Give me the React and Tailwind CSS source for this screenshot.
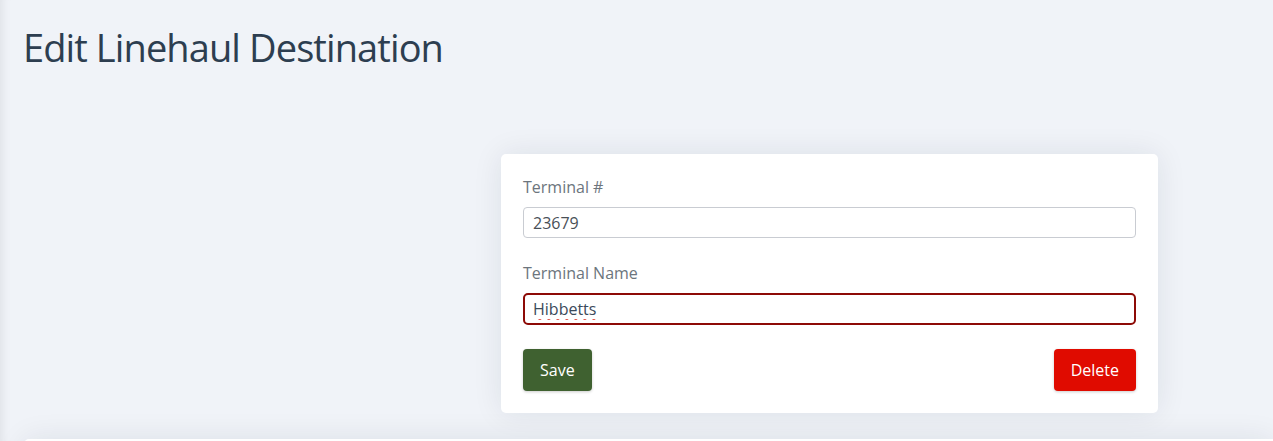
import React from 'react';

const font = { fontFamily: '"Open Sans", "Noto Sans", sans-serif' };

function Field({ label, value, focused }) {
  return (
    <div className="flex flex-col">
      <label className="text-[16px] leading-[22px] text-[#6c757d]">{label}</label>
      <input
        readOnly
        value={value}
        spellCheck={false}
        className={
          focused
            ? 'mt-[9px] h-[32px] w-full rounded-[5px] border-2 border-[#8d0a06] bg-white px-[8px] text-[16px] text-[#3b4a5a] outline-none underline decoration-wavy decoration-[#e0453a] underline-offset-[3px]'
            : 'mt-[9px] h-[31px] w-full rounded-[4px] border border-[#c9ccd2] bg-white px-[9px] text-[16px] text-[#495057] outline-none'
        }
      />
    </div>
  );
}

export default function App() {
  return (
    <div
      style={font}
      className="h-[441px] overflow-hidden bg-[#f0f3f8] shadow-[inset_10px_0_10px_-8px_rgba(0,0,0,0.08)]"
    >
      <div className="px-[23px] pt-[24px]">
        <h1 className="text-[38px] leading-[46px] tracking-[-0.9px] font-normal text-[#2d3e50]">Edit Linehaul Destination</h1>

        {/* Form card */}
        <div className="mt-[84px] ml-[478px] w-[657px] rounded-[5px] bg-white px-[22px] pt-[22px] pb-[22px] shadow-[0_0_30px_rgba(20,30,50,0.09)]">
          <Field label="Terminal #" value="23679" />
          <div className="mt-[24px]">
            <Field label="Terminal Name" value="Hibbetts" focused />
          </div>
          <div className="mt-[24px] flex items-center justify-between">
            <button className="h-[42px] rounded-[4px] bg-[#3f6130] px-[17px] text-[16px] font-medium text-white shadow-[0_1px_3px_rgba(0,0,0,0.2)]">
              Save
            </button>
            <button className="h-[42px] rounded-[4px] bg-[#e00b00] px-[17px] text-[16px] font-medium text-white shadow-[0_1px_3px_rgba(0,0,0,0.2)]">
              Delete
            </button>
          </div>
        </div>
      </div>

      {/* next card peeking in at the bottom */}
      <div className="mt-[26px] ml-[24px] h-[40px] rounded-tl-[5px] bg-white shadow-[0_0_30px_rgba(20,30,50,0.09)]" />
    </div>
  );
}
